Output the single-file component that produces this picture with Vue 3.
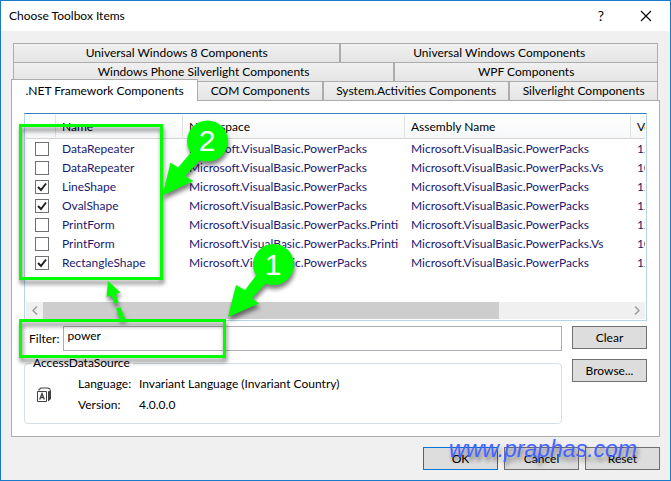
<script setup>
import { ref, computed } from 'vue'

const upperTabs = [
  [
    { label: 'Universal Windows 8 Components', grow: 327 },
    { label: 'Universal Windows Components', grow: 317 },
  ],
  [
    { label: 'Windows Phone Silverlight Components', grow: 381 },
    { label: 'WPF Components', grow: 263 },
  ],
]
const lowerTabs = [
  { label: '.NET Framework Components', grow: 187 },
  { label: 'COM Components', grow: 125 },
  { label: 'System.Activities Components', grow: 186 },
  { label: 'Silverlight Components', grow: 148 },
]
const activeTab = ref('.NET Framework Components')

const pack = 'Microsoft.VisualBasic.PowerPacks'
const items = ref([
  { name: 'DataRepeater', space: pack, assembly: pack, version: '12.0.0.0', on: false },
  { name: 'DataRepeater', space: pack, assembly: pack + '.Vs', version: '10.0.0.0', on: false },
  { name: 'LineShape', space: pack, assembly: pack, version: '12.0.0.0', on: true },
  { name: 'OvalShape', space: pack, assembly: pack, version: '12.0.0.0', on: true },
  { name: 'PrintForm', space: pack + '.Printing', assembly: pack, version: '12.0.0.0', on: false },
  { name: 'PrintForm', space: pack + '.Printing', assembly: pack + '.Vs', version: '10.0.0.0', on: false },
  { name: 'RectangleShape', space: pack, assembly: pack, version: '12.0.0.0', on: true },
])
const filter = ref('power')
const shown = computed(() =>
  items.value.filter((i) => (i.name + i.space).toLowerCase().includes(filter.value.toLowerCase()))
)
</script>

<template>
  <main class="dialog">
    <header class="titlebar">
      <h1>Choose Toolbox Items</h1>
      <button class="caption" aria-label="Help">?</button>
      <button class="caption" aria-label="Close">
        <svg width="12" height="12" viewBox="0 0 12 12"><path d="M1 1 11 11M11 1 1 11" stroke="#000" stroke-width="1.1" fill="none" /></svg>
      </button>
    </header>

    <div class="body">
      <div class="tabs" role="tablist">
        <div v-for="(row, r) in upperTabs" :key="r" class="tab-row">
          <button v-for="t in row" :key="t.label" class="tab" role="tab" :style="{ flexGrow: t.grow }">{{ t.label }}</button>
        </div>
        <div class="tab-row front">
          <button
            v-for="t in lowerTabs"
            :key="t.label"
            class="tab"
            role="tab"
            :class="{ active: t.label === activeTab }"
            :aria-selected="t.label === activeTab"
            :style="{ flexGrow: t.grow }"
            @click="activeTab = t.label"
          >{{ t.label }}</button>
        </div>
      </div>

      <section class="panel">
        <div class="list">
          <div class="viewport">
            <table>
              <colgroup><col class="c-check" /><col class="c-name" /><col class="c-space" /><col class="c-assembly" /><col class="c-version" /></colgroup>
              <thead>
                <tr><th></th><th>Name</th><th>Namespace</th><th>Assembly Name</th><th>Version</th></tr>
              </thead>
              <tbody>
                <tr v-for="(item, i) in shown" :key="i">
                  <td class="check"><input v-model="item.on" type="checkbox" :aria-label="item.name" /></td>
                  <td><span>{{ item.name }}</span></td>
                  <td><span>{{ item.space }}</span></td>
                  <td><span>{{ item.assembly }}</span></td>
                  <td><span>{{ item.version }}</span></td>
                </tr>
              </tbody>
            </table>
          </div>
          <div class="scrollbar">
            <button aria-label="Scroll left"><svg width="6" height="9" viewBox="0 0 6 9"><path d="M5 .5 1 4.500 5 8.500" stroke="#9b9b9b" stroke-width="1.500" fill="none" /></svg></button>
            <div class="track"><div class="thumb"></div></div>
            <button aria-label="Scroll right"><svg width="6" height="9" viewBox="0 0 6 9"><path d="M1 .5 5 4.500 1 8.500" stroke="#9b9b9b" stroke-width="1.500" fill="none" /></svg></button>
          </div>
        </div>

        <div class="lower">
          <div class="details">
            <div class="filter">
              <label for="filter">Filter:</label>
              <input id="filter" v-model="filter" type="text" />
            </div>
            <fieldset>
              <legend>AccessDataSource</legend>
              <svg class="glyph" width="15" height="15" viewBox="0 0 15 15">
                <path d="M2 3.500V2.500L4 1H11L13.500 2.500" fill="none" stroke="#424242" stroke-width="1.200" />
                <path d="M11 4.500 14 3V12L11 14.500Z" fill="#424242" />
                <path d="M.5 4.500H9.500V14.500H.5Z" fill="#fff" stroke="#424242" />
                <path d="M2.700 12.500 5 6.500 7.300 12.500M3.600 10.500H6.400" fill="none" stroke="#424242" stroke-width="1.300" />
              </svg>
              <dl>
                <dt>Language:</dt><dd>Invariant Language (Invariant Country)</dd>
                <dt>Version:</dt><dd>4.0.0.0</dd>
              </dl>
            </fieldset>
          </div>
          <div class="side">
            <button class="push" @click="filter = ''">Clear</button>
            <button class="push">Browse...</button>
          </div>
        </div>
      </section>

      <footer>
        <button class="push primary">OK</button>
        <button class="push">Cancel</button>
        <button class="push">Reset</button>
      </footer>
    </div>

    <svg class="notes" width="300" height="370" viewBox="0 0 300 370">
      <g class="lifted">
        <rect x="20.500" y="125.500" width="141" height="153" />
        <rect x="20.500" y="320.500" width="204" height="36" />
        <g class="solid">
          <path d="M108 281 120.500 292.500 115.500 294 118.500 302.500 114.500 303.700 111.500 295.500 106.500 297Z" />
          <path d="M116 308.500 120.500 307 125 319 120.500 320.500Z" />
        </g>
      </g>
      <g class="lifted solid">
        <path d="M162.500 195.500 170.500 162.500 178 167.500 194 149 204 156 185 176 193.500 181Z" />
        <circle cx="207.500" cy="141" r="20.500" />
        <path d="M228 317 236 285 245 290 258 273 269 280 252 298 259 303.500Z" />
        <circle cx="273.500" cy="264.500" r="20.500" />
      </g>
      <text x="207" y="151">2</text>
      <text x="273" y="275">1</text>
    </svg>
    <span class="watermark">www.praphas.com</span>
  </main>
</template>

<style>
body { margin: 0; }
</style>

<style scoped>
* { box-sizing: border-box; }
.dialog {
  position: relative;
  display: flex;
  flex-direction: column;
  min-height: 100vh;
  border: 1px solid #1979ca;
  background: #f0f0f0;
  color: #000;
  font: 12px/16px Lato, "Noto Sans", sans-serif;
  overflow: hidden;
}
button, input { font: inherit; color: inherit; margin: 0; }
.titlebar { display: flex; align-items: center; height: 30px; padding: 0 8px; background: #fff; }
h1 { flex: 1; margin: 0; font-size: 12px; font-weight: 400; }
.caption { display: flex; align-items: center; justify-content: center; width: 32px; height: 28px; margin-left: 13px; padding: 0; border: 0; background: none; font-size: 14px; }
.body { padding: 12px 10px 10px; }
.tabs { padding: 0 2px; }
.tab-row { display: flex; height: 19px; }
.tab {
  flex: 1 1 0;
  min-width: 0;
  padding: 0;
  border: 1px solid #acacac;
  border-bottom: 0;
  background: linear-gradient(#f0f0f0, #e5e5e5);
  white-space: nowrap;
  line-height: 18px;
}
.front { align-items: flex-end; margin-left: -2px; }
.front .tab { height: 19px; }
.front .tab.active { position: relative; z-index: 1; height: 22px; margin-bottom: -1px; background: #fff; }
.front .active + .tab { border-left: 0; }
.panel { padding: 12px; border: 1px solid #acacac; background: #fff; }
.list { padding: 1px; border: 1px solid #b5d5ea; border-top-color: #3a7ebf; }
.viewport { height: 187px; overflow: hidden; }
table { width: 675px; border-collapse: separate; border-spacing: 0; table-layout: fixed; }
.c-check { width: 30px; }
.c-name { width: 127px; }
.c-space { width: 222px; }
.c-assembly { width: 226px; }
.c-version { width: 70px; }
th {
  height: 24px;
  padding: 0 6px;
  border-right: 1px solid #e2e2e2;
  border-bottom: 1px solid #d5d5d5;
  background: linear-gradient(#fff, #f6f7f8);
  font-weight: 400;
  text-align: left;
}
td { height: 19px; padding: 0 6px; color: #191970; }
td span { display: block; overflow: hidden; white-space: nowrap; }
td.check { padding: 0 0 0 9px; line-height: 0; }
.check input {
  appearance: none;
  width: 14px;
  height: 14px;
  border: 1px solid #707070;
  background: #fff;
}
.check input:checked {
  background: #fff url("data:image/svg+xml,%3Csvg xmlns='http://www.w3.org/2000/svg' viewBox='0 0 12 12'%3E%3Cpath d='M2 6 5 9 10 2.500' fill='none' stroke='%23212121' stroke-width='2'/%3E%3C/svg%3E");
}
.scrollbar { display: flex; height: 17px; background: #f0f0f0; }
.scrollbar button { width: 17px; padding: 0; border: 0; background: none; line-height: 0; }
.track { flex: 1; }
.thumb { width: 78%; height: 100%; background: #cdcdcd; }
.lower { display: flex; gap: 10px; padding-top: 5px; }
.details { flex: 1; min-width: 0; }
.filter { display: flex; align-items: center; gap: 4px; padding-left: 5px; }
.filter input { flex: 1; min-width: 0; height: 25px; padding: 0 3px 6px; border: 1px solid #abadb3; outline: 0; background: #fff; }
fieldset {
  display: flex;
  align-items: center;
  gap: 26px;
  height: 69px;
  margin: 4px 0 0;
  padding: 0 12px 6px;
  border: 1px solid #d5dfe5;
  border-radius: 4px;
}
legend { margin-left: -6px; padding: 0 3px 0 2px; }
dl { display: grid; grid-template-columns: 61px 1fr; row-gap: 5px; margin: 0; }
dt, dd { margin: 0; white-space: nowrap; }
.side { display: flex; flex-direction: column; gap: 10px; }
.push { width: 75px; height: 23px; padding: 0; border: 1px solid #707070; background: #ddd; line-height: 20px; }
.primary { border-color: #0078d7; }
footer { display: flex; justify-content: flex-end; gap: 6px; padding-top: 10px; }
.notes { position: absolute; top: -1px; left: -1px; pointer-events: none; }
.lifted { fill: none; stroke: #0f0; stroke-width: 3px; filter: drop-shadow(1px 4px 2px rgb(0 0 0 / 50%)); }
.solid { fill: #0f0; stroke: none; }
.notes text { fill: #fff; font: 30px "Liberation Sans", sans-serif; text-anchor: middle; }
.watermark {
  position: absolute;
  right: 33px;
  bottom: 17px;
  color: #4763ff;
  font: italic 23px/28px "Liberation Sans", sans-serif;
  text-shadow: 2px 4px 4px rgb(0 0 0 / 45%);
  pointer-events: none;
}
</style>
